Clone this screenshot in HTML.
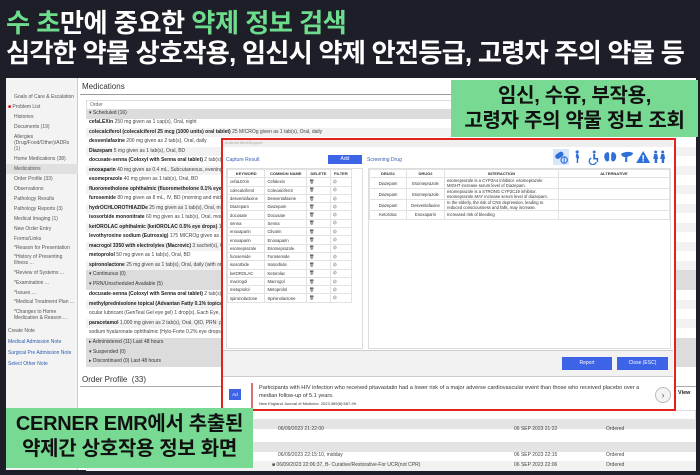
<!DOCTYPE html>
<html><head><meta charset="utf-8"><style>
*{margin:0;padding:0;box-sizing:border-box}
body{width:700px;height:475px;background:#1d1e27;position:relative;overflow:hidden;font-family:"Liberation Sans","Noto Sans CJK KR",sans-serif}
.abs{position:absolute}
.t1{left:6px;top:1px;font:700 26.3px "Liberation Sans","Noto Sans CJK KR",sans-serif;color:#fff;letter-spacing:-0.6px;white-space:nowrap}
.t2{left:6px;top:31px;font:700 26.3px "Liberation Sans","Noto Sans CJK KR",sans-serif;color:#fff;letter-spacing:-0.85px;white-space:nowrap}
.g{color:#6ddc8c}
.shot{left:6px;top:78px;width:690px;height:392px;background:#fff}
.side{left:6px;top:78px;width:72px;height:392px;background:#f3f3f3;border-right:1px solid #ccc}
.side div{font-size:5px;color:#555;position:absolute;left:8px;white-space:nowrap}
.side .lk{color:#2a5db0;left:2px}
.mt{font-size:8px;color:#333}
.row{position:absolute;left:86px;width:610px;height:9.5px;font-size:5px;color:#444;padding-left:3px;line-height:9.5px;white-space:nowrap;overflow:hidden}
.row b{color:#222}
.alt{background:#f2f2f2}
.hd{background:#dcdcdc;color:#333}
.green{background:#78d993;color:#111;font:700 20px "Liberation Sans","Noto Sans CJK KR",sans-serif;text-align:center;line-height:25px;letter-spacing:-0.3px}
.modal{left:221px;top:138px;width:455px;height:273px;border:2.5px solid #e3231b;background:#fff}
.mt2{font-size:5px}
table{border-collapse:collapse;font-size:4.2px;color:#333}
td,th{border:1px solid #e2e2e2;height:8.3px;padding:0 2px;white-space:nowrap}
th{font-weight:700;background:#fff;font-size:4px}
.btn{background:#3d63e6;color:#fff;font-size:5px;text-align:center}
.ic{display:inline-block;width:16.4px;height:16px;vertical-align:top}
</style></head><body>
<div class="abs t1"><span class="g">수 초</span>만에 중요한 <span class="g">약제 정보 검색</span></div>
<div class="abs t2">심각한 약물 상호작용, 임신시 약제 안전등급, 고령자 주의 약물 등</div>

<div class="abs shot"></div>
<div class="abs side">
<div style="top:16px">Goals of Care &amp; Escalation</div>
<div style="top:26px;left:2px"><span style="color:#c00">■</span> Problem List</div>
<div style="top:36px">Histories</div>
<div style="top:46px">Documents (19)</div>
<div style="top:56px">Allergies<br>(Drug/Food/Other)/ADRs<br>(1)</div>
<div style="top:78px">Home Medications (38)</div>
<div style="top:86px;left:0;width:72px;height:10px;background:#e0e0e0;padding-left:8px;line-height:10px">Medications</div>
<div style="top:98px">Order Profile (33)</div>
<div style="top:108px">Observations</div>
<div style="top:118px">Pathology Results</div>
<div style="top:128px">Pathology Reports (3)</div>
<div style="top:138px">Medical Imaging (1)</div>
<div style="top:148px">New Order Entry</div>
<div style="top:158px">Forms/Links</div>
<div style="top:167px">*Reason for Presentation</div>
<div style="top:176px">*History of Presenting<br>Illness ...</div>
<div style="top:192px">*Review of Systems ...</div>
<div style="top:202px">*Examination ...</div>
<div style="top:212px">*Issues ...</div>
<div style="top:221px">*Medical Treatment Plan ...</div>
<div style="top:231px">*Changes to Home<br>Medication &amp; Reason ...</div>
<div style="top:250px;left:2px">Create Note</div>
<div class="lk" style="top:261px">Medical Admission Note</div>
<div class="lk" style="top:272px">Surgical Pre Admission Note</div>
<div class="lk" style="top:283px">Select Other Note</div>
</div>
<div class="abs mt" style="left:82px;top:82px">Medications</div>
<div class="abs" style="left:80px;top:94px;width:616px;height:1px;background:#999"></div>
<div class="row" style="top:100px;border:1px solid #ddd;color:#666">Order</div>
<div class="row hd" style="top:109px">▾ Scheduled (16)</div>
<div class="row" style="top:118px"><b>cefaLEXin</b> 250 mg given as 1 cap(s), Oral, night</div>
<div class="row alt" style="top:127.5px"><b>colecalciferol (colecalciferol 25 mcg (1000 units) oral tablet)</b> 25 MICROg given as 1 tab(s), Oral, daily</div>
<div class="row" style="top:137px"><b>desvenlafaxine</b> 200 mg given as 2 tab(s), Oral, daily</div>
<div class="row alt" style="top:146.5px"><b>Diazepam</b> 5 mg given as 1 tab(s), Oral, BD</div>
<div class="row" style="top:156px"><b>docusate-senna (Coloxyl with Senna oral tablet)</b> 2 tab(s), Oral,</div>
<div class="row alt" style="top:165.5px"><b>enoxaparin</b> 40 mg given as 0.4 mL, Subcutaneous, evening</div>
<div class="row" style="top:175px"><b>esomeprazole</b> 40 mg given as 1 tab(s), Oral, BD</div>
<div class="row alt" style="top:184.5px"><b>fluorometholone ophthalmic (fluorometholone 0.1% eye drops)</b></div>
<div class="row" style="top:194px"><b>furosemide</b> 80 mg given as 8 mL, IV, BD (morning and midday)</div>
<div class="row alt" style="top:203.5px"><b>hydrOCHLOROTHIAZIDe</b> 25 mg given as 1 tab(s), Oral, morning</div>
<div class="row" style="top:213px"><b>isosorbide mononitrate</b> 60 mg given as 1 tab(s), Oral, morning</div>
<div class="row alt" style="top:222.5px"><b>ketOROLAC ophthalmic (ketOROLAC 0.5% eye drops)</b> 1 drop(s)</div>
<div class="row" style="top:232px"><b>levothyroxine sodium (Eutroxsig)</b> 175 MICROg given as 3.5 tab</div>
<div class="row alt" style="top:241.5px"><b>macrogol 3350 with electrolytes (Macrovic)</b> 3 sachet(s), Oral, BD</div>
<div class="row" style="top:251px"><b>metoprolol</b> 50 mg given as 1 tab(s), Oral, BD</div>
<div class="row alt" style="top:260.5px"><b>spironolactone</b> 25 mg given as 1 tab(s), Oral, daily (with or after</div>
<div class="row hd" style="top:270px">▾ Continuous (0)</div>
<div class="row hd" style="top:280px">▾ PRN/Unscheduled Available (5)</div>
<div class="row" style="top:290px"><b>docusate-senna (Coloxyl with Senna oral tablet)</b> 2 tab(s), Oral,</div>
<div class="row alt" style="top:299.5px"><b>methylprednisolone topical (Advantan Fatty 0.1% topical ointm</b></div>
<div class="row" style="top:309px">ocular lubricant (GenTeal Gel eye gel) 1 drop(s), Each Eye, daily</div>
<div class="row alt" style="top:318.5px"><b>paracetamol</b> 1,000 mg given as 2 tab(s), Oral, QID, PRN: pain</div>
<div class="row" style="top:328px">sodium hyaluronate ophthalmic (Hylo-Forte 0.2% eye drops) 1</div>
<div class="row hd" style="top:338px">▸ Administered (11) Last 48 hours</div>
<div class="row hd" style="top:347.5px">▾ Suspended (0)</div>
<div class="row hd" style="top:357px">▸ Discontinued (0) Last 48 hours</div>
<div class="abs mt" style="left:82px;top:375px;font-size:8px">Order Profile &nbsp;(33)</div>
<div class="abs" style="left:80px;top:386px;width:616px;height:1px;background:#aaa"></div>
<div class="row" style="top:410px;border:1px solid #ddd;color:#888;font-size:4px">Order</div>
<div class="row hd" style="top:419px;background:#e4e4e4"></div>
<div class="row" style="top:425px;padding-left:192px">06/09/2023 21:22:00<span style="position:absolute;left:428px">06 SEP 2023 21:22</span><span style="position:absolute;left:520px">Ordered</span></div>
<div class="row hd" style="top:442px;background:#e4e4e4"></div>
<div class="row" style="top:451px;padding-left:192px">06/09/2023 22:15:10, midday<span style="position:absolute;left:428px">06 SEP 2023 22:15</span><span style="position:absolute;left:520px">Ordered</span></div>
<div class="row alt" style="top:461px;padding-left:186px">■ 06/09/2023 22:06:37, B- Curative/Restorative-For UCR(not CPR)<span style="position:absolute;left:428px">06 SEP 2023 22:06</span><span style="position:absolute;left:520px">Ordered</span></div>
<div class="abs" style="left:678px;top:390px;font-size:5.5px;font-weight:700;color:#222">View</div>

<div class="abs modal">
 <div class="abs" style="left:0;top:0;width:450px;height:7px;background:#efefef;font-size:4px;color:#aaa;padding-left:2px">Android MediSupport</div>
 <div class="abs mt2" style="left:3px;top:17px;color:#3a5fb0">Capture Result</div>
 <div class="abs btn" style="left:105px;top:15px;width:34px;height:9px;line-height:9px">Add</div>
 <div class="abs mt2" style="left:144px;top:17px;color:#3a5fb0">Screening Drug</div>
 <div class="abs" style="left:330px;top:9px;white-space:nowrap;font-size:0">
  <svg class="ic" viewBox="0 0 16 16" style="background:#d6e6fb"><rect x="2" y="4" width="9" height="5" rx="2.5" transform="rotate(-35 6 7)" fill="#2f6fd8"/><circle cx="11" cy="11" r="3.2" fill="none" stroke="#2f6fd8" stroke-width="1.2"/><line x1="11" y1="8.5" x2="11" y2="13.5" stroke="#2f6fd8"/></svg>
  <svg class="ic" viewBox="0 0 16 16"><circle cx="8" cy="3" r="1.6" fill="#2f6fd8"/><path d="M7 5h2l1 4-1 1v4H7.5V9L6.5 8z" fill="#2f6fd8"/></svg>
  <svg class="ic" viewBox="0 0 16 16"><circle cx="8" cy="3" r="1.5" fill="#2f6fd8"/><path d="M7 5h2v4h3v4h-1.5v-2.5H7z" fill="#2f6fd8"/><path d="M5 9a3.5 3.5 0 1 0 5 4" fill="none" stroke="#2f6fd8" stroke-width="1.3"/></svg>
  <svg class="ic" viewBox="0 0 16 16"><path d="M6 3C2 3 1 8 3 11c1 2 3 2 4 0V5z M10 3c4 0 5 5 3 8-1 2-3 2-4 0V5z" fill="#2f6fd8"/></svg>
  <svg class="ic" viewBox="0 0 16 16"><path d="M2 5c2-2 8-3 12-1-1 3-4 3-6 4v5H6V8C4 8 2 7 2 5z" fill="#2f6fd8"/></svg>
  <svg class="ic" viewBox="0 0 16 16"><path d="M8 2L15 14H1z" fill="#2f6fd8"/><rect x="7.3" y="6" width="1.4" height="4.5" fill="#fff"/><rect x="7.3" y="11.3" width="1.4" height="1.4" fill="#fff"/></svg>
  <svg class="ic" viewBox="0 0 16 16"><circle cx="4.5" cy="3" r="1.5" fill="#2f6fd8"/><circle cx="11.5" cy="3" r="1.5" fill="#2f6fd8"/><path d="M3 5h3l1 5H6v4H3.5v-4H2z M10 5h3l1 5h-1v4h-2.5v-4H9z" fill="#2f6fd8"/></svg>
 </div>
 <div class="abs" style="left:3px;top:28px;width:137px;height:181px;border:1px solid #ddd">
 <table style="width:125px"><tr><th>KEYWORD</th><th>COMMON NAME</th><th>DELETE</th><th>FILTER</th></tr>
 <tr><td>cefaLEXin</td><td>Cefalexin</td><td>🗑</td><td>⊘</td></tr>
 <tr><td>colecalciferol</td><td>Colecalciferol</td><td>🗑</td><td>⊘</td></tr>
 <tr><td>desvenlafaxine</td><td>Desvenlafaxine</td><td>🗑</td><td>⊘</td></tr>
 <tr><td>Diazepam</td><td>Diazepam</td><td>🗑</td><td>⊘</td></tr>
 <tr><td>docusate</td><td>Docusate</td><td>🗑</td><td>⊘</td></tr>
 <tr><td>senna</td><td>Senna</td><td>🗑</td><td>⊘</td></tr>
 <tr><td>enoxaparin</td><td>Clivarin</td><td>🗑</td><td>⊘</td></tr>
 <tr><td>enoxaparin</td><td>Enoxaparin</td><td>🗑</td><td>⊘</td></tr>
 <tr><td>esomeprazole</td><td>Esomeprazole</td><td>🗑</td><td>⊘</td></tr>
 <tr><td>furosemide</td><td>Furosemide</td><td>🗑</td><td>⊘</td></tr>
 <tr><td>isosorbide</td><td>Isosorbide</td><td>🗑</td><td>⊘</td></tr>
 <tr><td>ketOROLAC</td><td>Ketorolac</td><td>🗑</td><td>⊘</td></tr>
 <tr><td>macrogol</td><td>Macrogol</td><td>🗑</td><td>⊘</td></tr>
 <tr><td>metoprolol</td><td>Metoprolol</td><td>🗑</td><td>⊘</td></tr>
 <tr><td>spironolactone</td><td>Spironolactone</td><td>🗑</td><td>⊘</td></tr></table>
 </div>
 <div class="abs" style="left:145px;top:28px;width:303px;height:181px;border:1px solid #ddd">
 <table style="width:301px"><tr><th style="width:37px">DRUG1</th><th style="width:38px">DRUG2</th><th style="width:114px">INTERACTION</th><th>ALTERNATIVE</th></tr>
 <tr><td style="text-align:center">Diazepam</td><td style="text-align:center">Esomeprazole</td><td style="white-space:normal;line-height:5px">esomeprazole is a CYP3A4 inhibitor. esomeprazole MIGHT increase serum level of Diazepam.</td><td></td></tr>
 <tr><td style="text-align:center">Diazepam</td><td style="text-align:center">Esomeprazole</td><td style="white-space:normal;line-height:5px">esomeprazole is a STRONG CYP2C19 inhibitor. esomeprazole MAY increase serum level of diazepam.</td><td></td></tr>
 <tr><td style="text-align:center">Diazepam</td><td style="text-align:center">Desvenlafaxine</td><td style="white-space:normal;line-height:5px">In the elderly, the risk of CNS depression, leading to reduced consciousness and falls, may increase.</td><td></td></tr>
 <tr><td style="text-align:center">Ketorolac</td><td style="text-align:center">Enoxaparin</td><td>Increased risk of bleeding</td><td></td></tr></table>
 </div>
 <div class="abs" style="left:0;top:210px;width:450px;height:27px;background:#f2f2f2;border-top:1px solid #ccc;border-bottom:1px solid #ccc"></div>
 <div class="abs btn" style="left:339px;top:217px;width:50px;height:13px;line-height:13px">Report</div>
 <div class="abs btn" style="left:394px;top:217px;width:51px;height:13px;line-height:13px">Close (ESC)</div>
 <div class="abs" style="left:6px;top:249px;width:12px;height:11px;background:#3d63e6;color:#fff;font-size:4.5px;text-align:center;line-height:11px">Ad</div>
 <div class="abs" style="left:28px;top:243px;width:1.5px;height:25px;background:#e07070"></div>
 <div class="abs" style="left:36px;top:244px;width:400px;font-size:5.6px;line-height:8px;color:#333">Participants with HIV infection who received pitavastatin had a lower risk of a major adverse cardiovascular event than those who received placebo over a median follow-up of 5.1 years.<div style="font-size:4px;line-height:7px">New England Journal of Medicine. 2023;389(8):687-99.</div></div>
 <div class="abs" style="left:432px;top:247px;width:16px;height:16px;border-radius:50%;border:1px solid #bbb;background:#f4f4f4;text-align:center;line-height:15px;font-size:9px;color:#666">›</div>
</div>

<div class="abs green" style="left:451px;top:80px;width:247px;height:57px;padding-top:4px">임신, 수유, 부작용,<br>고령자 주의 약물 정보 조회</div>
<div class="abs green" style="left:6px;top:408px;width:247px;height:60px;padding-top:4px">CERNER EMR에서 추출된<br>약제간 상호작용 정보 화면</div>
</body></html>
